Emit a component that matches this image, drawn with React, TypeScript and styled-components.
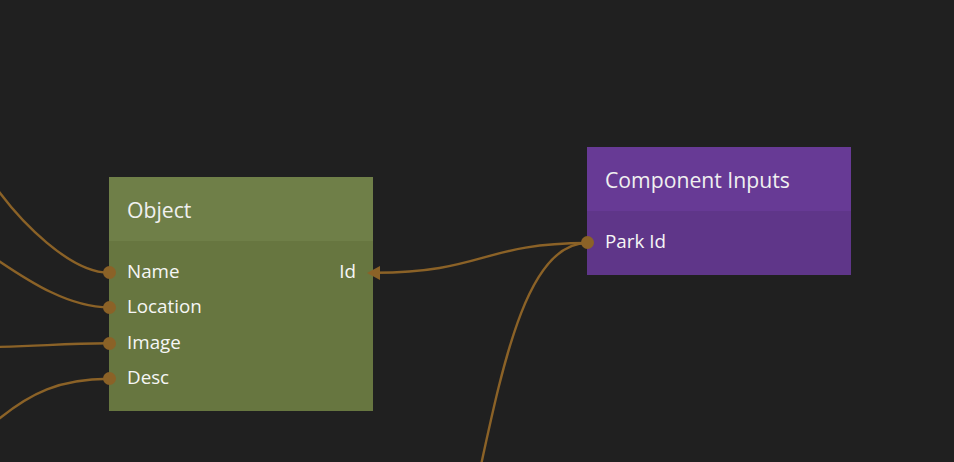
import React from "react";
import styled, { createGlobalStyle } from "styled-components";

const WIRE = "#8b6227";

const GlobalStyle = createGlobalStyle`
  html, body {
    margin: 0;
    padding: 0;
    background: #202020;
  }
  body {
    font-family: "Open Sans", "Noto Sans", sans-serif;
  }
`;

type Tone = "object" | "component";

const tones: Record<Tone, { head: string; body: string }> = {
  object: { head: "#6f7f48", body: "#677640" },
  component: { head: "#673a95", body: "#5f3689" },
};

const Canvas = styled.div`
  position: relative;
  width: 954px;
  height: 462px;
  overflow: hidden;
  background: #202020;
`;

const WireLayer = styled.svg`
  position: absolute;
  inset: 0;
  width: 954px;
  height: 462px;
  pointer-events: none;
`;

const Node = styled.div<{ $x: number; $y: number; $tone: Tone }>`
  position: absolute;
  left: ${(p) => p.$x}px;
  top: ${(p) => p.$y}px;
  width: 264px;
  display: flex;
  flex-direction: column;
  color: #f6f6f6;
  background: ${(p) => tones[p.$tone].body};
`;

const NodeHeader = styled.div<{ $tone: Tone }>`
  height: 64px;
  display: flex;
  align-items: center;
  padding: 0 17px 0 18px;
  background: ${(p) => tones[p.$tone].head};
  font-size: 21.2px;
  color: #f0f0f0;
  white-space: nowrap;
`;

const NodeBody = styled.div`
  display: flex;
  flex-direction: column;
  padding: 12.5px 0 15.8px;
`;

const PortRow = styled.div`
  position: relative;
  height: 35.33px;
  display: flex;
  align-items: center;
  justify-content: space-between;
  padding: 0 17px 0 18px;
  font-size: 18.8px;
  white-space: nowrap;
`;

const PortDot = styled.span`
  position: absolute;
  left: -6.5px;
  top: calc(50% - 5px);
  width: 13px;
  height: 13px;
  border-radius: 50%;
  background: ${WIRE};
`;

const ArrowHead = styled.span`
  position: absolute;
  right: -7px;
  top: calc(50% - 5.5px);
  width: 0;
  height: 0;
  border-top: 7px solid transparent;
  border-bottom: 7px solid transparent;
  border-right: 13px solid ${WIRE};
`;

const wires = [
  "M -20 166.4 L 0 193 C 20 219.7, 69 272.7, 109 272.7",
  "M -20 248.3 L 0 261.7 C 30 281.8, 69 307.3, 109 307.3",
  "M -10 347 C 40 346.5, 60 343.3, 109 343.3",
  "M -20 434 L 0 418 C 30 394, 59 378.7, 109 378.7",
  "M 587 243 C 483 243, 483 272.7, 375 272.7",
  "M 587 243 C 470 243, 490 700, 370 700",
];

export default function App() {
  return (
    <>
      <GlobalStyle />
      <Canvas>
        <WireLayer viewBox="0 0 954 462">
          {wires.map((d, i) => (
            <path key={i} d={d} fill="none" stroke={WIRE} strokeWidth={2.4} />
          ))}
        </WireLayer>

        <Node $x={109} $y={177} $tone="object">
          <NodeHeader $tone="object">Object</NodeHeader>
          <NodeBody>
            <PortRow>
              <PortDot />
              <span>Name</span>
              <span>Id</span>
              <ArrowHead />
            </PortRow>
            <PortRow>
              <PortDot />
              <span>Location</span>
            </PortRow>
            <PortRow>
              <PortDot />
              <span>Image</span>
            </PortRow>
            <PortRow>
              <PortDot />
              <span>Desc</span>
            </PortRow>
          </NodeBody>
        </Node>

        <Node $x={587} $y={147} $tone="component">
          <NodeHeader $tone="component">Component Inputs</NodeHeader>
          <NodeBody>
            <PortRow>
              <PortDot />
              <span>Park Id</span>
            </PortRow>
          </NodeBody>
        </Node>
      </Canvas>
    </>
  );
}
